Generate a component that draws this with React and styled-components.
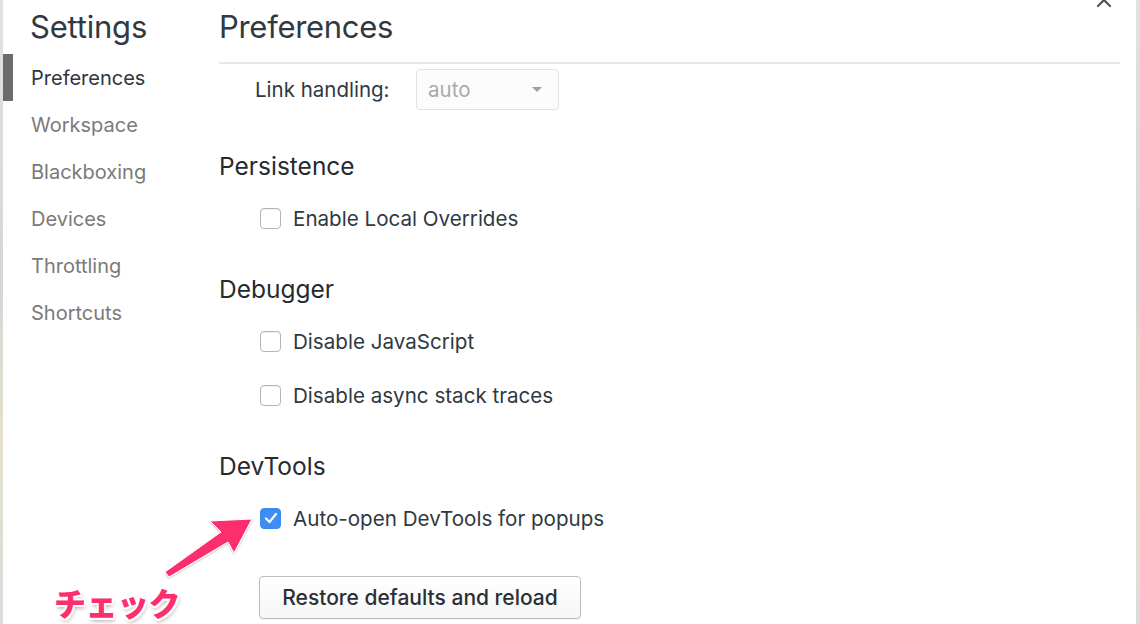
import React from 'react';
import styled, { createGlobalStyle } from 'styled-components';

const GlobalStyle = createGlobalStyle`
  html, body {
    margin: 0;
    padding: 0;
    background: #fff;
  }
  body {
    font-family: Inter, "Liberation Sans", "Noto Sans CJK JP", sans-serif;
    color: #303942;
  }
`;

const navItems = ['Preferences', 'Workspace', 'Blackboxing', 'Devices', 'Throttling', 'Shortcuts'];

const App = () => {
  return (
    <>
      <GlobalStyle />
      <Page>
        <Edge />
        <Sidebar>
          <SideTitle>Settings</SideTitle>
          {navItems.map((item, i) => (
            <NavItem key={item} active={i === 0}>{item}</NavItem>
          ))}
        </Sidebar>
        <Main>
          <Title>Preferences</Title>
          <Divider />
          <Row>
            <FieldLabel>Link handling:</FieldLabel>
            <Select>
              <span>auto</span>
              <Caret />
            </Select>
          </Row>

          <Section>
            <Heading>Persistence</Heading>
            <CheckRow>
              <Box />
              <span>Enable Local Overrides</span>
            </CheckRow>
          </Section>

          <Section>
            <Heading>Debugger</Heading>
            <CheckRow>
              <Box />
              <span>Disable JavaScript</span>
            </CheckRow>
            <CheckRow>
              <Box />
              <span>Disable async stack traces</span>
            </CheckRow>
          </Section>

          <Section>
            <Heading>DevTools</Heading>
            <CheckRow>
              <Box checked>
                <svg width="14" height="12" viewBox="0 0 14 12">
                  <path d="M2 6.5 L5.5 10 L12 2" fill="none" stroke="#fff" strokeWidth="2.2" strokeLinecap="round" strokeLinejoin="round" />
                </svg>
              </Box>
              <span>Auto-open DevTools for popups</span>
            </CheckRow>
          </Section>

          <ResetButton>Restore defaults and reload</ResetButton>
        </Main>
        <Edge right />

        <Close width="16" height="8" viewBox="0 0 16 8">
          <path d="M1 -6 L13 6 M13 -6 L1 6" stroke="#555" strokeWidth="2.2" strokeLinecap="round" />
        </Close>
        <Arrow width="120" height="80" viewBox="0 0 120 80">
          <defs>
            <filter id="sh" x="-20%" y="-20%" width="140%" height="140%">
              <feDropShadow dx="0" dy="1" stdDeviation="1.2" floodColor="#000" floodOpacity="0.25" />
            </filter>
          </defs>
          <polygon
            filter="url(#sh)"
            fill="#fb2f6e"
            stroke="#fff"
            strokeWidth="1"
            points="100,4 58,6 69,17 13,57 17,62 76,27 82,38"
          />
        </Arrow>
        <Note>チェック</Note>
      </Page>
    </>
  );
};

export default App;

const Page = styled.div`
  position: relative;
  display: flex;
  width: 1140px;
  height: 624px;
  overflow: hidden;
  background: #fff;
`;

const Edge = styled.div`
  width: ${(p) => (p.right ? '4px' : '3px')};
  flex-shrink: 0;
  background: linear-gradient(#e2e2e2, #d6d6d6 45%, #e4e0cc 70%, #dcdcdc);
`;

const Sidebar = styled.div`
  width: 216px;
  flex-shrink: 0;
  display: flex;
  flex-direction: column;
`;

const SideTitle = styled.div`
  height: 54px;
  padding-left: 27px;
  font-size: 31px;
  line-height: 54px;
  color: #303942;
  letter-spacing: -0.2px;
`;

const NavItem = styled.div`
  height: 47px;
  display: flex;
  align-items: center;
  border-left: 10px solid ${(p) => (p.active ? '#6b6b6b' : 'transparent')};
  padding-left: 18px;
  font-size: 20px;
  color: ${(p) => (p.active ? '#2e3640' : '#7a7a7a')};
`;

const Main = styled.div`
  flex: 1;
  padding-right: 16px;
  display: flex;
  flex-direction: column;
  align-items: flex-start;
`;

const Title = styled.div`
  height: 54px;
  font-size: 31px;
  line-height: 54px;
  color: #303942;
  letter-spacing: -0.3px;
`;

const Divider = styled.div`
  align-self: stretch;
  height: 2px;
  margin-top: 8px;
  background: #e8e8e8;
`;

const Row = styled.div`
  display: flex;
  align-items: center;
  height: 41px;
  margin: 5px 0;
  padding-left: 36px;
  font-size: 20.5px;
`;

const FieldLabel = styled.span`
  width: 161px;
`;

const Select = styled.div`
  box-sizing: border-box;
  width: 143px;
  height: 41px;
  display: flex;
  align-items: center;
  justify-content: space-between;
  padding: 0 12px 0 11px;
  border: 1px solid #e2e2e2;
  border-radius: 4px;
  background: #fcfcfc;
  color: #a9a9a9;
  font-size: 20.5px;
`;

const Caret = styled.span`
  width: 0;
  height: 0;
  border-left: 5px solid transparent;
  border-right: 5px solid transparent;
  border-top: 5px solid #a0a0a0;
  margin-right: 4px;
`;

const Section = styled.div`
  margin-top: 36px;
  display: flex;
  flex-direction: column;
  gap: 14px;
`;

const Heading = styled.div`
  height: 30px;
  line-height: 30px;
  margin-bottom: 3px;
  font-size: 24.5px;
  color: #262b30;
`;

const CheckRow = styled.label`
  display: flex;
  align-items: center;
  height: 40px;
  padding-left: 41px;
  gap: 12px;
  font-size: 20.6px;
  color: #303942;
`;

const Box = styled.span`
  box-sizing: border-box;
  width: 21px;
  height: 21px;
  display: flex;
  align-items: center;
  justify-content: center;
  border-radius: 4px;
  border: 1px solid ${(p) => (p.checked ? '#3a8cf0' : '#b5b5b5')};
  background: ${(p) => (p.checked ? '#3c8ef3' : '#fff')};
  box-shadow: inset 0 1px 1px rgba(0, 0, 0, 0.06);
`;

const ResetButton = styled.button`
  margin-top: 38px;
  margin-left: 40px;
  width: 322px;
  height: 43px;
  border: 1px solid #bdbdbd;
  border-radius: 4px;
  background: linear-gradient(#ffffff, #f6f6f6);
  font-family: Inter, "Liberation Sans", sans-serif;
  font-size: 21px;
  font-weight: 500;
  color: #2a2f35;
  box-shadow: 0 1px 1px rgba(0, 0, 0, 0.05);
`;

const Close = styled.svg`
  position: absolute;
  top: 0;
  right: 27px;
`;

const Arrow = styled.svg`
  position: absolute;
  left: 152px;
  top: 515px;
`;

const Note = styled.div`
  position: absolute;
  left: 54px;
  top: 581px;
  font-family: "Noto Sans CJK JP", sans-serif;
  font-size: 32px;
  font-weight: 900;
  line-height: 42px;
  letter-spacing: -0.5px;
  color: #fb2f6e;
  text-shadow:
    2px 0 0 #fff, -2px 0 0 #fff, 0 2px 0 #fff, 0 -2px 0 #fff,
    1.5px 1.5px 0 #fff, -1.5px -1.5px 0 #fff, 1.5px -1.5px 0 #fff, -1.5px 1.5px 0 #fff,
    1px 3px 4px rgba(0, 0, 0, 0.35);
`;
